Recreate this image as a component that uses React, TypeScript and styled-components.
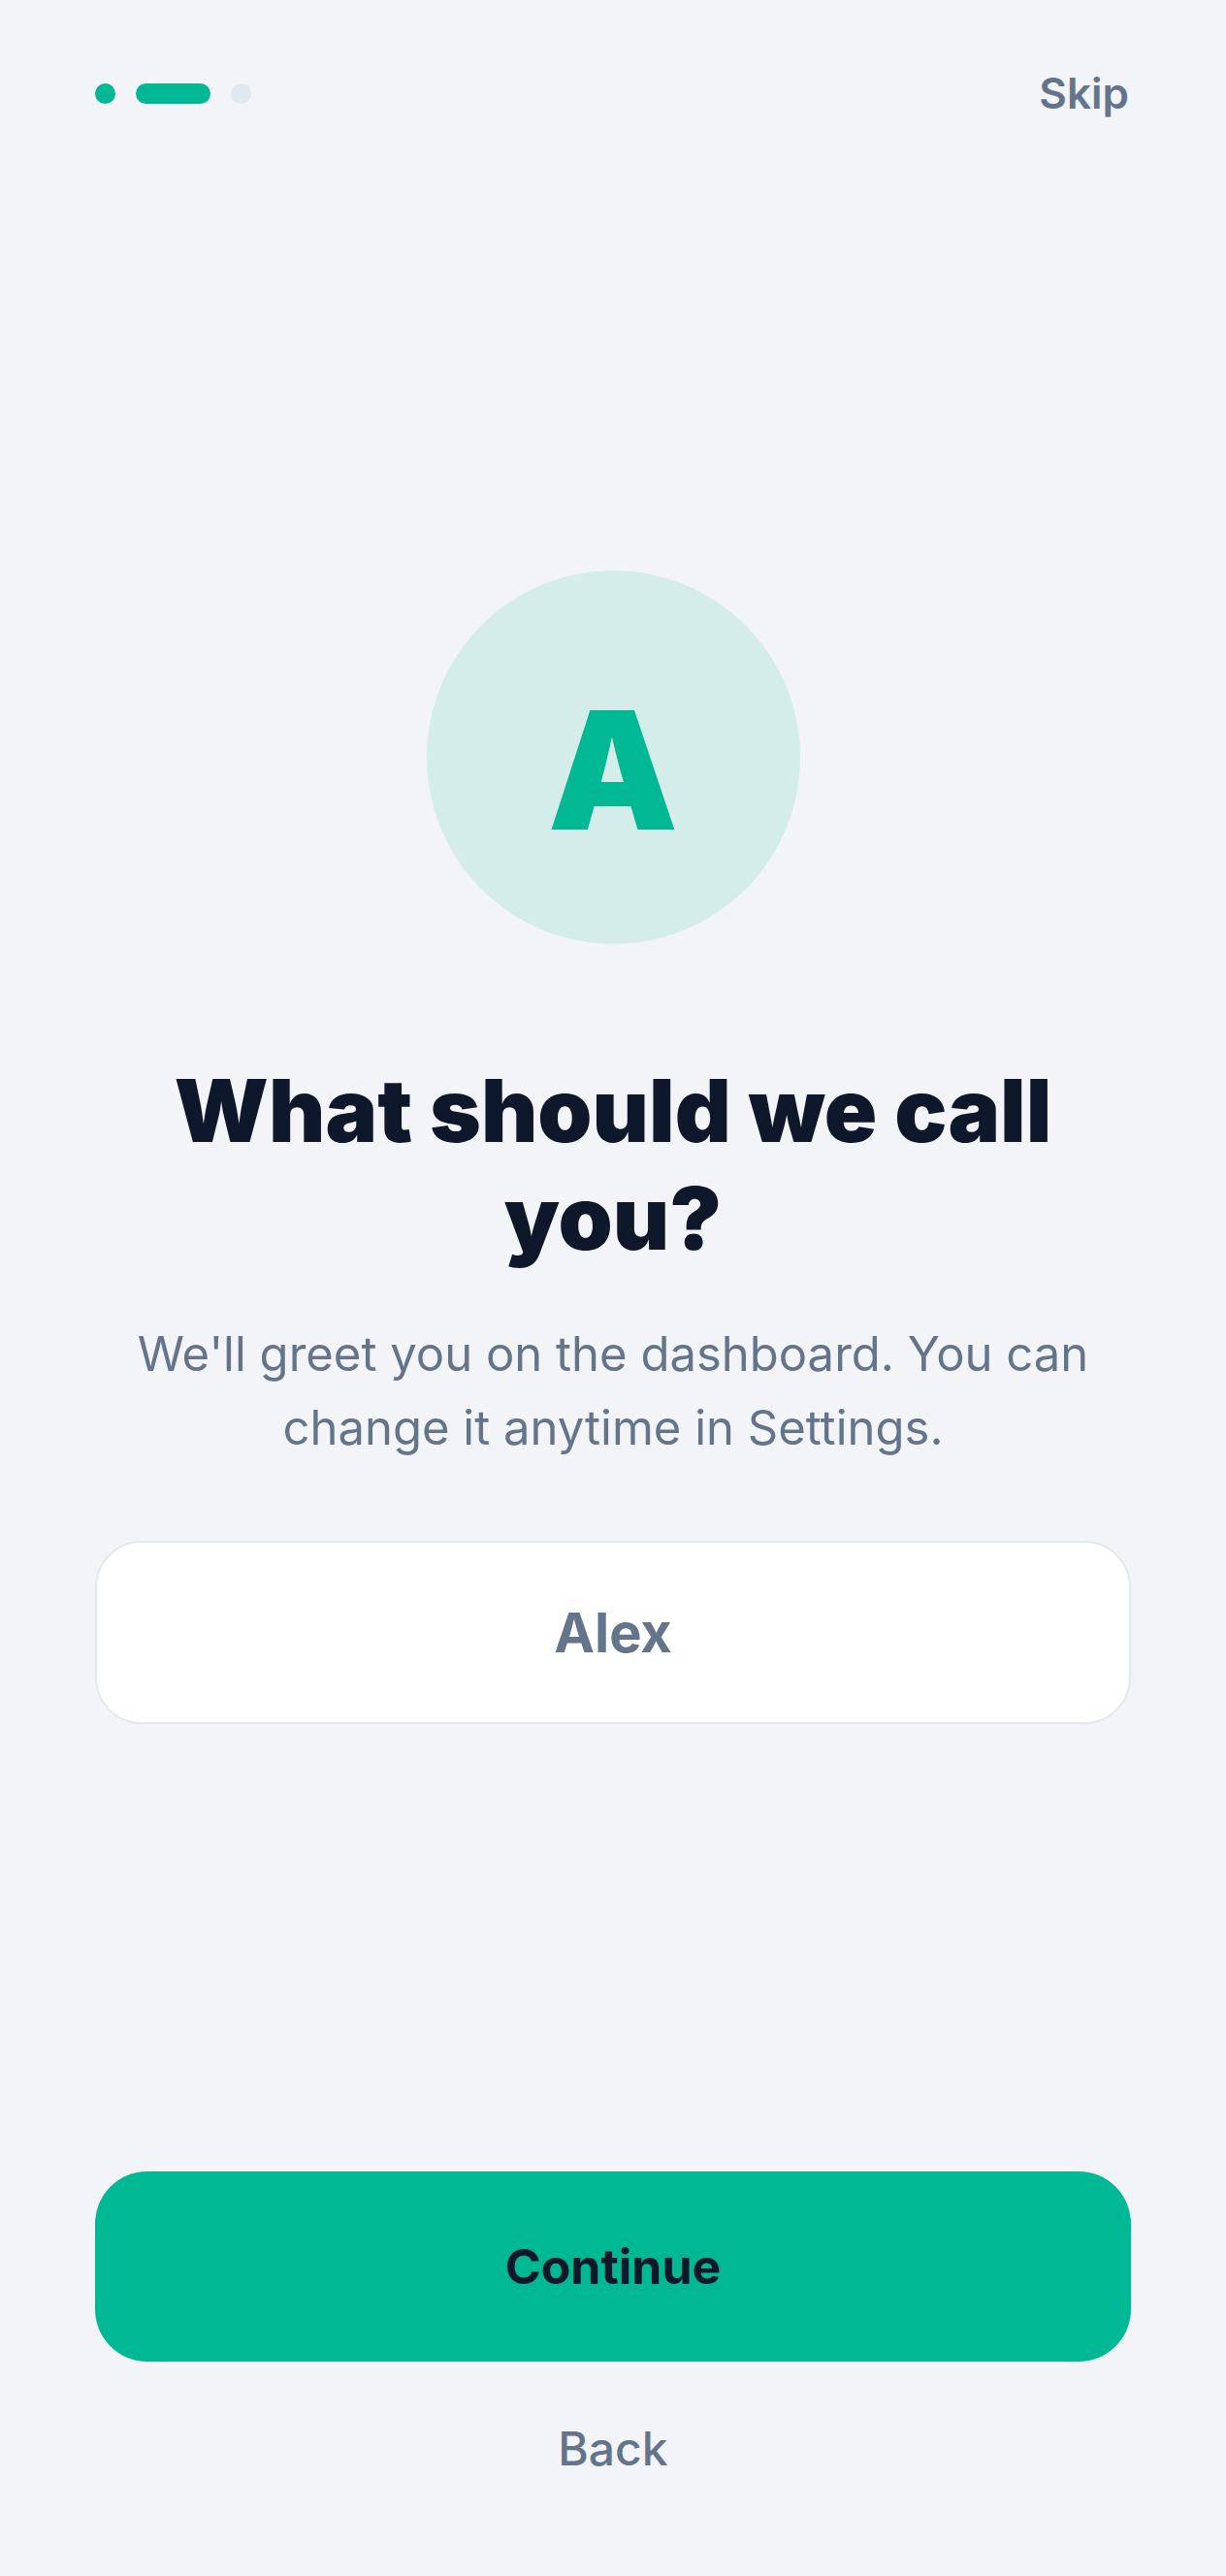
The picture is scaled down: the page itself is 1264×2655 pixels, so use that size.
import { createGlobalStyle } from "styled-components";
import styled from "styled-components";

const COLORS = {
	bg: "#f2f4f8",
	ink: "#0f172a",
	muted: "#64748b",
	mint: "#00b894",
	mintSoft: "#d4edeb",
	track: "#e2e8f0",
	border: "#e2e8f0",
};

const GlobalStyle = createGlobalStyle`
  html, body {
    margin: 0;
    padding: 0;
    background: ${COLORS.bg};
  }
  body {
    font-family: 'Inter', 'Noto Sans', sans-serif;
    -webkit-font-smoothing: antialiased;
  }
  * {
    box-sizing: border-box;
  }
`;

const STEPS = ["done", "current", "todo"] as const;
type StepState = (typeof STEPS)[number];

const App = () => {
	return (
		<>
			<GlobalStyle />
			<Page>
				<TopBar>
					<Progress>
						{STEPS.map((state, i) => (
							<Step key={i} $state={state} />
						))}
					</Progress>
					<SkipButton type="button">Skip</SkipButton>
				</TopBar>

				<Avatar>
					<Initial>A</Initial>
				</Avatar>

				<Title>What should we call you?</Title>
				<Subtitle>
					We'll greet you on the dashboard. You can change it anytime in
					Settings.
				</Subtitle>

				<NameInput defaultValue="Alex" aria-label="Your name" />

				<Footer>
					<PrimaryButton type="button">Continue</PrimaryButton>
					<GhostButton type="button">Back</GhostButton>
				</Footer>
			</Page>
		</>
	);
};

const Page = styled.main`
  min-height: 100vh;
  display: flex;
  flex-direction: column;
  align-items: center;
  padding: 0 98px 102px;
`;

const TopBar = styled.header`
  width: 100%;
  height: 192px;
  display: flex;
  align-items: center;
  justify-content: space-between;
`;

const Progress = styled.div`
  display: flex;
  gap: 21px;
`;

const Step = styled.span<{ $state: StepState }>`
  display: block;
  height: 21px;
  width: ${(p) => (p.$state === "current" ? "77px" : "21px")};
  border-radius: 999px;
  background: ${(p) => (p.$state === "todo" ? COLORS.track : COLORS.mint)};
`;

const SkipButton = styled.button`
  border: 0;
  background: none;
  padding: 0;
  margin-right: 2px;
  font-family: inherit;
  font-size: 44px;
  font-weight: 600;
  color: ${COLORS.muted};
  cursor: pointer;
`;

const Avatar = styled.div`
  margin-top: 396px;
  width: 385px;
  height: 385px;
  border-radius: 50%;
  background: ${COLORS.mintSoft};
  display: flex;
  align-items: center;
  justify-content: center;
`;

const Initial = styled.span`
  padding-top: 26px;
  font-size: 169px;
  line-height: 1;
  font-weight: 900;
  color: ${COLORS.mint};
`;

const Title = styled.h1`
  margin: 116px 0 0;
  max-width: 980px;
  text-align: center;
  font-size: 90px;
  line-height: 111px;
  font-weight: 900;
  letter-spacing: 0;
  color: ${COLORS.ink};
`;

const Subtitle = styled.p`
  margin: 47px 0 0;
  max-width: 1020px;
  text-align: center;
  font-size: 49px;
  line-height: 76px;
  font-weight: 400;
  color: ${COLORS.muted};
`;

const NameInput = styled.input`
  margin-top: 78px;
  width: 100%;
  height: 189px;
  border: 2px solid ${COLORS.border};
  border-radius: 48px;
  background: #ffffff;
  text-align: center;
  font-family: inherit;
  font-size: 56px;
  font-weight: 700;
  color: ${COLORS.muted};
  outline: none;
`;

const Footer = styled.footer`
  margin-top: auto;
  width: 100%;
  display: flex;
  flex-direction: column;
  align-items: center;
  gap: 61px;
`;

const PrimaryButton = styled.button`
  width: 100%;
  height: 196px;
  border: 0;
  border-radius: 54px;
  background: ${COLORS.mint};
  font-family: inherit;
  font-size: 50px;
  font-weight: 700;
  color: ${COLORS.ink};
  cursor: pointer;
`;

const GhostButton = styled.button`
  border: 0;
  background: none;
  padding: 0;
  font-family: inherit;
  font-size: 48px;
  line-height: 58px;
  font-weight: 500;
  color: ${COLORS.muted};
  cursor: pointer;
`;

export default App;
